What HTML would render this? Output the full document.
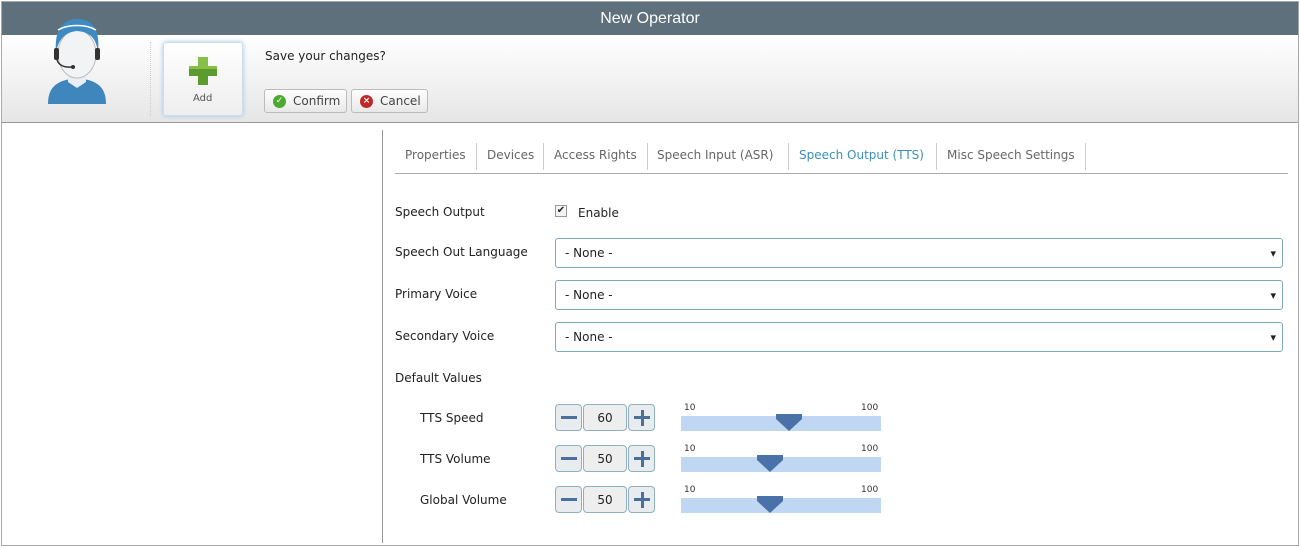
<!DOCTYPE html><html><head><style>
*{box-sizing:border-box}body{margin:0;width:1300px;height:547px;background:#fff;font-family:"DejaVu Sans","Liberation Sans",sans-serif;font-size:12px;color:#222;position:relative;overflow:hidden}
.a{position:absolute}
.frame{left:1px;top:1px;width:1298px;height:545px;border:1px solid #aaa}
.title{left:2px;top:2px;width:1296px;height:33px;background:#5e707b;color:#fff;font-size:16px;text-align:center;line-height:33px;font-family:"Liberation Sans",sans-serif}
.tb{left:2px;top:35px;width:1296px;height:88px;background:linear-gradient(#fff,#e6e6e6);border-bottom:1px solid #999}
.btn{height:24px;border:1px solid #bbb;border-radius:3px;background:linear-gradient(#fff,#e8e8e8);font-size:12px;line-height:23px;color:#444;padding-left:28px}
.tab{top:148px;font-size:12px;color:#666}
.sep{top:143px;width:1px;height:27px;background:#ccc}
.lbl{left:395px;font-size:12px}
.sel{left:555px;width:728px;height:30px;border:1px solid #7fa9b8;border-radius:3px;padding:0 9px;line-height:29px}
.sel:after{content:"▾";position:absolute;right:6px;top:0;font-size:11px}
.sb{width:27px;height:27px;border:1px solid #8fb0c0;border-radius:4px;background:#e8ecef}
.val{width:44px;height:27px;border:1px solid #8fb0c0;border-radius:4px;background:#eeeeee;text-align:center;line-height:26px}
.tr{left:681px;width:200px;height:15px;background:#c0d7f3}
.sl{font-size:9px;color:#333}
</style></head><body>
<div class="a frame"></div>
<div class="a title">New Operator</div>
<div class="a tb"></div>
<svg class="a" style="left:44px;top:16px" width="66" height="88" viewBox="0 0 66 88">
<path d="M4 88 C4 70 14 64 33 62 C52 64 62 70 62 88 Z" fill="#3f86bd"/>
<path d="M24 56 L42 56 L42 66 L33 72 L24 66Z" fill="#e8eef2"/>
<ellipse cx="33" cy="38" rx="19" ry="24" fill="#f1f3f4" stroke="#bbb"/>
<path d="M12 36 C10 10 22 2 36 3 C50 4 56 16 54 36 C52 22 46 16 33 15 C22 16 15 22 12 36Z" fill="#3d8bc2"/>
<path d="M14 14 C24 8 42 8 52 14" stroke="#fff" stroke-width="1.5" fill="none"/>
<rect x="10" y="32" width="5" height="12" rx="2" fill="#333"/><rect x="51" y="32" width="5" height="12" rx="2" fill="#333"/>
<path d="M13 44 Q16 52 28 51" stroke="#333" stroke-width="1.5" fill="none"/><circle cx="29" cy="51" r="2" fill="#333"/>
</svg>
<div class="a" style="left:150px;top:42px;height:74px;border-left:1px dotted #ccc"></div>
<div class="a" style="left:163px;top:42px;width:80px;height:74px;border-radius:3px;background:linear-gradient(#fff,#eee);box-shadow:0 0 5px #9cc9e0;border:1px solid #cde"></div>
<svg class="a" style="left:189px;top:57px" width="28" height="28"><path d="M9 0h10v9h9v10h-9v9H9v-9H0V9h9z" fill="#5d9b2f"/><path d="M9 0h10v9h9v3H0V9h9z" fill="#86c04a"/></svg>
<div class="a" style="left:193px;top:93px;font-size:10px;color:#555">Add</div>
<div class="a" style="left:265px;top:49px">Save your changes?</div>
<div class="a btn" style="left:264px;top:89px;width:83px">Confirm</div>
<div class="a" style="left:273px;top:95px;width:13px;height:13px;border-radius:50%;background:#4caa30;color:#fff;font-size:9px;line-height:13px;text-align:center">✓</div>
<div class="a btn" style="left:351px;top:89px;width:77px">Cancel</div>
<div class="a" style="left:360px;top:95px;width:13px;height:13px;border-radius:50%;background:#c02828;color:#fff;font-size:9px;line-height:13px;text-align:center;font-weight:bold">×</div>
<div class="a" style="left:382px;top:130px;width:1px;height:413px;background:#999"></div>
<div class="a tab" style="left:405px">Properties</div><div class="a sep" style="left:476px"></div>
<div class="a tab" style="left:487px">Devices</div><div class="a sep" style="left:543px"></div>
<div class="a tab" style="left:554px">Access Rights</div><div class="a sep" style="left:647px"></div>
<div class="a tab" style="left:657px">Speech Input (ASR)</div><div class="a sep" style="left:788px"></div>
<div class="a tab" style="left:799px;color:#3a8fbf">Speech Output (TTS)</div><div class="a sep" style="left:936px"></div>
<div class="a tab" style="left:947px">Misc Speech Settings</div><div class="a sep" style="left:1085px"></div>
<div class="a" style="left:395px;top:173px;width:893px;height:1px;background:#aaa"></div>
<div class="a lbl" style="top:205px">Speech Output</div>
<div class="a" style="left:555px;top:205px;width:12px;height:12px;border:1px solid #999;background:#f4f4f4;font-size:10px;line-height:10px;text-align:center">✔</div>
<div class="a" style="left:578px;top:206px">Enable</div>
<div class="a lbl" style="top:245px">Speech Out Language</div><div class="a sel" style="top:238px">- None -</div>
<div class="a lbl" style="top:287px">Primary Voice</div><div class="a sel" style="top:280px">- None -</div>
<div class="a lbl" style="top:329px">Secondary Voice</div><div class="a sel" style="top:322px">- None -</div>
<div class="a lbl" style="top:371px">Default Values</div>
<div id="r"></div>
<script>
var rows=[["TTS Speed",60,404,789],["TTS Volume",50,445,770],["Global Volume",50,486,770]],h="";
rows.forEach(function(r){var y=r[2];
h+='<div class="a" style="left:420px;top:'+(y+7)+'px">'+r[0]+'</div>';
h+='<div class="a sb" style="left:555px;top:'+y+'px"><div class="a" style="left:5px;top:11px;width:16px;height:3px;background:#4a6f9a"></div></div>';
h+='<div class="a val" style="left:583px;top:'+y+'px">'+r[1]+'</div>';
h+='<div class="a sb" style="left:628px;top:'+y+'px"><div class="a" style="left:5px;top:11px;width:16px;height:3px;background:#4a6f9a"></div><div class="a" style="left:11.5px;top:5px;width:3px;height:16px;background:#4a6f9a"></div></div>';
h+='<div class="a sl" style="left:684px;top:'+(y-1)+'px">10</div><div class="a sl" style="left:861px;top:'+(y-1)+'px">100</div>';
h+='<div class="a tr" style="top:'+(y+12)+'px"></div>';
h+='<svg class="a" style="left:'+(r[3]-13)+'px;top:'+(y+10)+'px" width="26" height="18"><path d="M0 0H26V5L13 17L0 5Z" fill="#4a72a8"/></svg>';});
document.getElementById("r").innerHTML=h;
</script>
</body></html>
